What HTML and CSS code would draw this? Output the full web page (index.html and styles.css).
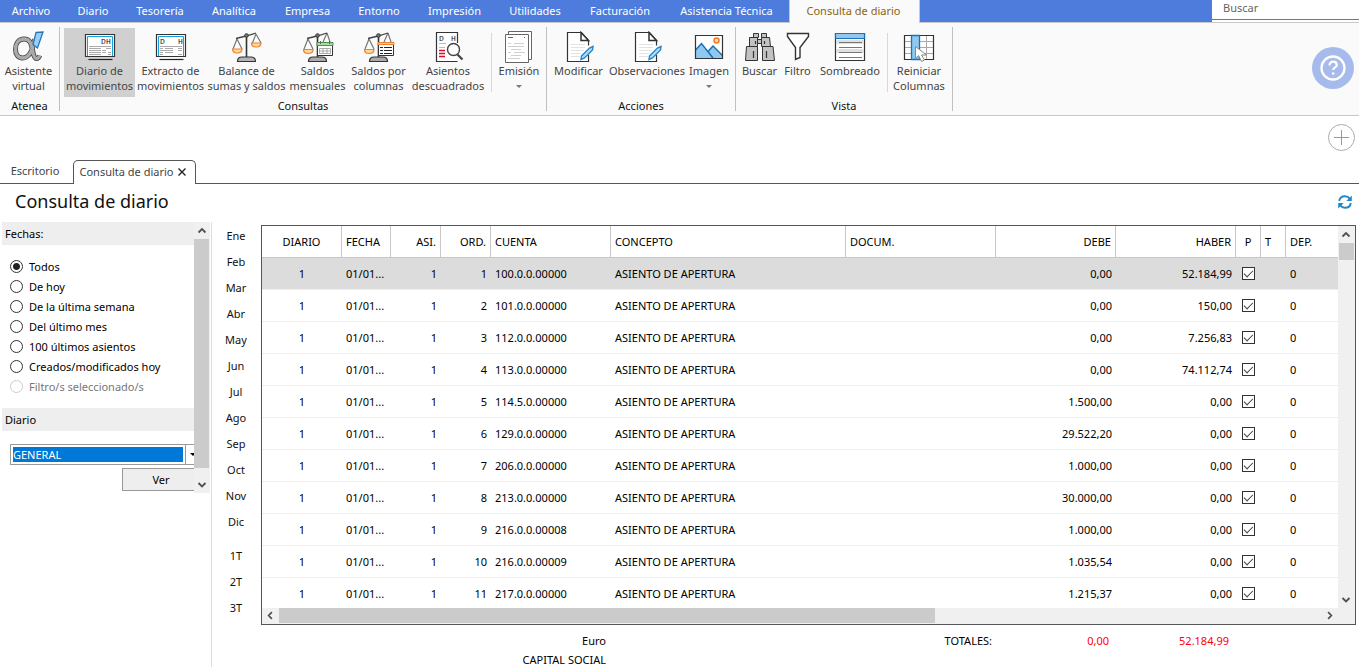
FILE: index.html
```html
<!DOCTYPE html>
<html lang="es">
<head>
<meta charset="utf-8">
<title>Consulta de diario</title>
<link rel="stylesheet" href="styles.css">
</head>
<body>
<svg class="defs" aria-hidden="true">
  <symbol id="balance" viewBox="0 0 32 32">
    <path d="M6 8 2 18M6 8l5 10M25 3l-4 10M25 3l5 9" fill="none" stroke="#777" stroke-width="1.2"/>
    <path d="M15.500 5v21" stroke="#333" stroke-width="1.600"/>
    <path d="M5 7.500l10-2.500 10-3" fill="none" stroke="#444" stroke-width="1.300"/>
    <circle cx="15.500" cy="4.500" r="1.800" fill="#777" stroke="#333"/>
    <path d="M1.500 18h9.500c0 2.500-2 4-4.700 4s-4.800-1.500-4.800-4zM20.500 12h9.500c0 2.500-2 4-4.700 4s-4.800-1.500-4.800-4z" fill="#ffd894" stroke="#e8833a" stroke-width="1.200"/>
    <path d="M6.500 30.500c0-3 1.500-4.500 4.500-4.500h9c3 0 4.500 1.500 4.500 4.500z" fill="#b5b5b5" stroke="#333" stroke-width="1.200"/>
  </symbol>
  <symbol id="halfbalance" viewBox="0 0 32 32">
    <path d="M6 8 2 18M6 8l5 10M25 2l-4 9M25 2l3 9" fill="none" stroke="#777" stroke-width="1.200"/>
    <path d="M15.500 5v21" stroke="#333" stroke-width="1.600"/>
    <path d="M5 7.500l10-2.500 10-3" fill="none" stroke="#444" stroke-width="1.300"/>
    <circle cx="15.500" cy="4.500" r="1.800" fill="#777" stroke="#333"/>
    <path d="M1.500 18.500h9.500c0 2.500-2 4-4.700 4s-4.800-1.500-4.800-4z" fill="#ffd894" stroke="#e8833a" stroke-width="1.200"/>
    <path d="M6.500 30.500c0-3 1.500-4.500 4.500-4.500h9c3 0 4.500 1.500 4.500 4.500z" fill="#aaa" stroke="#333" stroke-width="1.200"/>
  </symbol>
  <symbol id="editdoc" viewBox="0 0 32 32">
    <path d="M25.500 24v6.500h-21v-29h14l7 8v5" fill="#fff" stroke="#333" stroke-width="1.200"/>
    <path d="M18 1.500v8h7.500z" fill="#fff" stroke="#333" stroke-width="1.500"/>
    <path d="M8 13.500h14M8 16.500h14M8 19.500h13M8 22.500h10M8 25.500h9" stroke="#e2e2e2"/>
    <path d="m18.500 25 8-8 3.500-1.500-.5 3.500-8 8-3.500 1.500z" fill="#b5dcf5" stroke="#2385cc" stroke-width="1.400"/>
  </symbol>
  <symbol id="up" viewBox="0 0 16 16"><path d="M4.500 10 8 6.500l3.500 3.500" fill="none" stroke="#505050" stroke-width="1.800"/></symbol>
  <symbol id="down" viewBox="0 0 16 16"><path d="M4.500 6.500 8 10l3.500-3.500" fill="none" stroke="#505050" stroke-width="1.800"/></symbol>
  <symbol id="left" viewBox="0 0 16 16"><path d="M9.500 4.500 6 8l3.500 3.500" fill="none" stroke="#505050" stroke-width="1.800"/></symbol>
  <symbol id="right" viewBox="0 0 16 16"><path d="M6.500 4.500 10 8l-3.500 3.500" fill="none" stroke="#505050" stroke-width="1.800"/></symbol>
</svg>

<header class="topbar">
  <nav class="menu">
    <button>Archivo</button><button>Diario</button><button>Tesorería</button><button>Analítica</button><button>Empresa</button><button>Entorno</button><button>Impresión</button><button>Utilidades</button><button>Facturación</button><button>Asistencia Técnica</button><button class="current">Consulta de diario</button>
  </nav>
  <div class="search"><input type="text" placeholder="Buscar" aria-label="Buscar"></div>
</header>

<section class="ribbon">
  <div class="group atenea">
    <div class="tools">
      <button class="tool"><svg viewBox="0 0 32 32"><path d="M21.500 8c-1.500 10-5 19-12 19C5 27 2.500 23.500 2.500 18S5.500 8 11 8c6 0 7.500 5 8.500 11 1 6 2 8.500 4 8.500 1.700 0 2.500-1 3.200-3" fill="none" stroke="#444" stroke-width="5"/><path d="M21.500 8c-1.500 10-5 19-12 19C5 27 2.500 23.500 2.500 18S5.500 8 11 8c6 0 7.500 5 8.500 11 1 6 2 8.500 4 8.500 1.700 0 2.500-1 3.200-3" fill="none" stroke="#aaa" stroke-width="3.400"/><path d="m23 1.500 7-.5-5.500 16-4.500-3.500z" fill="#9bcff5" stroke="#2378bd" stroke-width="1.300"/></svg><span>Asistente<br>virtual</span></button>
    </div>
    <h2>Atenea</h2>
  </div>
  <div class="group consultas">
    <div class="tools">
      <button class="tool active"><svg viewBox="0 0 32 32"><path d="M1.500 3.500h29v22h-29z" fill="#fff" stroke="#333" stroke-width="1.200"/><path d="M3.500 25V5.500h25V25" fill="none" stroke="#1aa0dc"/><path d="M4.500 28.500h24" stroke="#222" stroke-width="1.200"/><path d="M5 15.500h22M5 17.500h12M5 19.500h12M5 21.500h12M5 23.500h12M22 17.500h5M18 19.500h4M18 21.500h4M24 21.500h3M24 23.500h3" stroke="#aaa"/><text x="17" y="13">D</text><text x="22" y="13">H</text></svg><span>Diario de<br>movimientos</span></button>
      <button class="tool"><svg viewBox="0 0 32 32"><path d="M1.500 3.500h29v22h-29z" fill="#fff" stroke="#333" stroke-width="1.200"/><path d="M3.500 25V5.500h25V25" fill="none" stroke="#1aa0dc"/><path d="M4.500 28.500h24" stroke="#222" stroke-width="1.200"/><path d="M5 15.500h22M5 17.500h3M10 17.500h8M5 19.500h13M5 21.500h3M10 21.500h8M5 23.500h3M23 17.500h4M23 19.500h4M23 23.500h4" stroke="#aaa"/><text x="5" y="13">D</text><text x="23" y="13">H</text></svg><span>Extracto de<br>movimientos</span></button>
      <button class="tool"><svg><use href="#balance"/></svg><span>Balance de<br>sumas y saldos</span></button>
      <button class="tool"><svg viewBox="0 0 32 32"><use href="#halfbalance"/><path d="M15.500 12.500h15v12h-15z" fill="#fff" stroke="#333"/><path d="M15 11.500h16v3H15z" fill="#a8dba0" stroke="#4e8f55"/><path d="M18.500 10v3M27.500 10v3" stroke="#3e7d4a"/><path d="M17.500 17.500h11v5h-11zM17.500 20h11M21 17.500v5M25 17.500v5" fill="none" stroke="#aaa"/></svg><span>Saldos<br>mensuales</span></button>
      <button class="tool"><svg viewBox="0 0 32 32"><use href="#halfbalance"/><path d="M15.500 12.500h15v12h-15z" fill="#fff" stroke="#333"/><path d="M15 11.500h16v2H15z" fill="#ffc982" stroke="#e8833a"/><path d="M17 16.500h3M21 16.500h8M17 19.500h3M21 19.500h8M17 22.500h3M21 22.500h8" stroke="#222"/></svg><span>Saldos por<br>columnas</span></button>
      <button class="tool"><svg viewBox="0 0 32 32"><path d="M25.500 12V1.500h-21v29h21" fill="#fff" stroke="#333" stroke-width="1.200"/><text x="7" y="10">D</text><text x="19" y="10">H</text><path d="M7 12.500h7M7 16.500h6" stroke="#bbb"/><path d="M7 19.500h6M7 22.500h6M7 25.500h6" stroke="#d90d2c" stroke-width="1.300"/><circle cx="21.500" cy="18.500" r="6" fill="#fff" stroke="#444" stroke-width="1.400"/><path d="m25.500 23.500 5 5" stroke="#444" stroke-width="2.200"/></svg><span>Asientos<br>descuadrados</span></button>
      <i class="divider"></i>
      <button class="tool"><svg viewBox="0 0 32 32"><path d="M5.500 3.500v-3h23v28h-3" fill="#fff" stroke="#666"/><path d="M2.500 3.500h23v28h-23z" fill="#fff" stroke="#666"/><path d="M5 12.500h3M11 12.500h10M5 15.500h16M8 18.500h10M5 21.500h3M11 21.500h11M8 24.500h10M5 27.500h12" stroke="#d0d0d0"/><path d="M5 6.500h5M21 6.500h1" stroke="#666"/></svg><span>Emisión</span><i class="caret"></i></button>
    </div>
    <h2>Consultas</h2>
  </div>
  <div class="group acciones">
    <div class="tools">
      <button class="tool"><svg><use href="#editdoc"/></svg><span>Modificar</span></button>
      <button class="tool"><svg><use href="#editdoc"/></svg><span>Observaciones</span></button>
      <button class="tool"><svg viewBox="0 0 32 32"><path d="M2.500 4.500h27v23h-27z" fill="#fff"/><path d="m2.500 19 6-6.500 6.500 8 5-5.500 9.500 9.500v3h-27z" fill="#8fc8f0"/><path d="m2.500 19 6-6.500L20 27M15 20.500l5-5.500 9.500 9.500" fill="none" stroke="#176dae" stroke-width="1.400"/><path d="M2.500 4.500h27v23h-27z" fill="none" stroke="#333" stroke-width="1.200"/><circle cx="23.500" cy="9.500" r="2.500" fill="#ffdda0" stroke="#f07b32" stroke-width="1.500"/></svg><span>Imagen</span><i class="caret"></i></button>
    </div>
    <h2>Acciones</h2>
  </div>
  <div class="group vista">
    <div class="tools">
      <button class="tool"><svg viewBox="0 0 32 32"><g fill="#c2c2c2" stroke="#333"><path d="M9.500 2.500h5v4h-5zM17.500 2.500h5v4h-5zM13 8.500h6v4h-6z"/><path d="M5.500 6.500h8v9h-8zM17.500 6.500h8l1 9h-9z"/><path d="M2.500 15.500h11v14h-12zM18.500 15.500H29l1.500 14h-12z"/></g><path d="M11.500 10v3M20.500 10v3M9.500 20v7M22.500 20v7" stroke="#333" stroke-width="1.200"/></svg><span>Buscar</span></button>
      <button class="tool"><svg viewBox="0 0 32 32"><path d="M5.500 2.500h21v3l-8.500 11v10l-4.500 2v-12l-8-11z" fill="#fff" stroke="#333" stroke-width="1.400"/></svg><span>Filtro</span></button>
      <button class="tool"><svg viewBox="0 0 32 32"><path d="M1.500 2.500h29v27h-29z" fill="#fff" stroke="#333" stroke-width="1.200"/><path d="M2 9h28v4H2zM2 18h28v4H2z" fill="#e0e0e0"/><path d="M1.500 2.500h29v5h-29z" fill="#90c8f0" stroke="#1874b8" stroke-width="1.200"/><path d="M5 11.500h23M5 16.500h23M5 21.500h23M5 26.500h23" stroke="#777"/></svg><span>Sombreado</span></button>
      <i class="divider"></i>
      <button class="tool"><svg viewBox="0 0 32 32"><path d="M1.500 4.500h29v24h-29z" fill="#fff"/><path d="M2 10.500h28M2 16.500h28M2 22.500h28M23.500 4v24" stroke="#aaa"/><path d="M1.500 4.500h29v24h-29z" fill="none" stroke="#333" stroke-width="1.200"/><path d="M8.500 4.500h8v24h-8z" fill="#90c8f0" stroke="#1874b8" stroke-width="1.300"/><path d="M12.500 15.500v12l3-3 3 6 3-1.500-3-5h5z" fill="#fff" stroke="#888"/></svg><span>Reiniciar<br>Columnas</span></button>
    </div>
    <h2>Vista</h2>
  </div>
  <button class="help" aria-label="Ayuda"><svg viewBox="0 0 42 42"><circle cx="21" cy="21" r="21" fill="#a6bbec"/><circle cx="21" cy="21" r="11.500" fill="none" stroke="#fff" stroke-width="2.300"/><path d="M17.500 18.500c0-2.500 1.500-3.800 3.600-3.800 2.200 0 3.700 1.300 3.700 3.200 0 2.600-3.600 2.500-3.600 5.100" fill="none" stroke="#fff" stroke-width="2.200"/><circle cx="21.200" cy="26.500" r="1.300" fill="#fff"/></svg></button>
</section>

<div class="addrow"><button aria-label="Añadir"><svg viewBox="0 0 28 28"><circle cx="14.500" cy="14.500" r="13" fill="none" stroke="#aaa"/><path d="M7 14.500h15M14.500 7v15" stroke="#999"/></svg></button></div>

<nav class="tabs">
  <button class="tab">Escritorio</button>
  <button class="tab open">Consulta de diario <svg viewBox="0 0 8 8"><path d="m.5.5 7 7m0-7-7 7" stroke="#222" stroke-width="1.400"/></svg></button>
</nav>

<div class="title">
  <h1>Consulta de diario</h1>
  <button aria-label="Actualizar"><svg viewBox="0 0 16 16"><path d="M2.200 7C2.600 4 5 2.200 8 2.200c2 0 3.600.9 4.700 2.400M13.800 9c-.4 3-2.800 4.800-5.800 4.800-2 0-3.600-.9-4.700-2.400" fill="none" stroke="#2388cc" stroke-width="1.900"/><path d="M14.800 1.500V7H9.300zM1.200 14.500V9h5.500z" fill="#2388cc"/></svg></button>
</div>

<main class="content">
  <aside class="filters">
    <form class="pane">
      <h3>Fechas:</h3>
      <div class="radios">
        <label><input type="radio" name="fecha" checked>Todos</label>
        <label><input type="radio" name="fecha">De hoy</label>
        <label><input type="radio" name="fecha">De la última semana</label>
        <label><input type="radio" name="fecha">Del último mes</label>
        <label><input type="radio" name="fecha">100 últimos asientos</label>
        <label><input type="radio" name="fecha">Creados/modificados hoy</label>
        <label class="off"><input type="radio" name="fecha" disabled>Filtro/s seleccionado/s</label>
      </div>
      <h3>Diario</h3>
      <div class="combo"><select aria-label="Diario"><option>GENERAL</option></select><i><b class="caret"></b></i></div>
      <button type="button" class="ver">Ver</button>
    </form>
    <div class="vscroll"><svg><use href="#up"/></svg><div class="thumb"></div><svg><use href="#down"/></svg></div>
  </aside>

  <nav class="months">
    <button>Ene</button><button>Feb</button><button>Mar</button><button>Abr</button><button>May</button><button>Jun</button><button>Jul</button><button>Ago</button><button>Sep</button><button>Oct</button><button>Nov</button><button>Dic</button>
    <button class="quarter">1T</button><button>2T</button><button>3T</button>
  </nav>

  <section class="ledger">
    <div class="grid">
      <div class="rows">
        <table>
          <colgroup><col class="c80"><col class="c49"><col class="c50"><col class="c50"><col class="c120"><col><col class="c150"><col class="c120"><col class="c120"><col class="c25"><col class="c25"><col class="c52"></colgroup>
          <thead><tr><th class="mid">DIARIO</th><th>FECHA</th><th class="num">ASI.</th><th class="num">ORD.</th><th>CUENTA</th><th>CONCEPTO</th><th>DOCUM.</th><th class="num">DEBE</th><th class="num">HABER</th><th class="mid">P</th><th>T</th><th>DEP.</th></tr></thead>
          <tbody>
            <tr class="selected"><td class="mid">1</td><td>01/01...</td><td class="num">1</td><td class="num">1</td><td>100.0.0.00000</td><td>ASIENTO DE APERTURA</td><td></td><td class="num">0,00</td><td class="num">52.184,99</td><td class="mid"><input type="checkbox" aria-label="P 1" checked></td><td></td><td>0</td></tr>
            <tr><td class="mid">1</td><td>01/01...</td><td class="num">1</td><td class="num">2</td><td>101.0.0.00000</td><td>ASIENTO DE APERTURA</td><td></td><td class="num">0,00</td><td class="num">150,00</td><td class="mid"><input type="checkbox" aria-label="P 2" checked></td><td></td><td>0</td></tr>
            <tr><td class="mid">1</td><td>01/01...</td><td class="num">1</td><td class="num">3</td><td>112.0.0.00000</td><td>ASIENTO DE APERTURA</td><td></td><td class="num">0,00</td><td class="num">7.256,83</td><td class="mid"><input type="checkbox" aria-label="P 3" checked></td><td></td><td>0</td></tr>
            <tr><td class="mid">1</td><td>01/01...</td><td class="num">1</td><td class="num">4</td><td>113.0.0.00000</td><td>ASIENTO DE APERTURA</td><td></td><td class="num">0,00</td><td class="num">74.112,74</td><td class="mid"><input type="checkbox" aria-label="P 4" checked></td><td></td><td>0</td></tr>
            <tr><td class="mid">1</td><td>01/01...</td><td class="num">1</td><td class="num">5</td><td>114.5.0.00000</td><td>ASIENTO DE APERTURA</td><td></td><td class="num">1.500,00</td><td class="num">0,00</td><td class="mid"><input type="checkbox" aria-label="P 5" checked></td><td></td><td>0</td></tr>
            <tr><td class="mid">1</td><td>01/01...</td><td class="num">1</td><td class="num">6</td><td>129.0.0.00000</td><td>ASIENTO DE APERTURA</td><td></td><td class="num">29.522,20</td><td class="num">0,00</td><td class="mid"><input type="checkbox" aria-label="P 6" checked></td><td></td><td>0</td></tr>
            <tr><td class="mid">1</td><td>01/01...</td><td class="num">1</td><td class="num">7</td><td>206.0.0.00000</td><td>ASIENTO DE APERTURA</td><td></td><td class="num">1.000,00</td><td class="num">0,00</td><td class="mid"><input type="checkbox" aria-label="P 7" checked></td><td></td><td>0</td></tr>
            <tr><td class="mid">1</td><td>01/01...</td><td class="num">1</td><td class="num">8</td><td>213.0.0.00000</td><td>ASIENTO DE APERTURA</td><td></td><td class="num">30.000,00</td><td class="num">0,00</td><td class="mid"><input type="checkbox" aria-label="P 8" checked></td><td></td><td>0</td></tr>
            <tr><td class="mid">1</td><td>01/01...</td><td class="num">1</td><td class="num">9</td><td>216.0.0.00008</td><td>ASIENTO DE APERTURA</td><td></td><td class="num">1.000,00</td><td class="num">0,00</td><td class="mid"><input type="checkbox" aria-label="P 9" checked></td><td></td><td>0</td></tr>
            <tr><td class="mid">1</td><td>01/01...</td><td class="num">1</td><td class="num">10</td><td>216.0.0.00009</td><td>ASIENTO DE APERTURA</td><td></td><td class="num">1.035,54</td><td class="num">0,00</td><td class="mid"><input type="checkbox" aria-label="P 10" checked></td><td></td><td>0</td></tr>
            <tr><td class="mid">1</td><td>01/01...</td><td class="num">1</td><td class="num">11</td><td>217.0.0.00000</td><td>ASIENTO DE APERTURA</td><td></td><td class="num">1.215,37</td><td class="num">0,00</td><td class="mid"><input type="checkbox" aria-label="P 11" checked></td><td></td><td>0</td></tr>
          </tbody>
        </table>
      </div>
      <div class="vscroll short"><svg><use href="#up"/></svg><div class="thumb"></div><svg><use href="#down"/></svg></div>
      <div class="hscroll"><svg><use href="#left"/></svg><div class="track"><div class="thumb"></div></div><svg><use href="#right"/></svg></div>
    </div>
    <div class="totals">
      <span>Euro</span><span>TOTALES:</span><span class="red">0,00</span><span class="red">52.184,99</span>
      <span>CAPITAL SOCIAL</span>
    </div>
  </section>
</main>
</body>
</html>
```
FILE: styles.css
```css
* { box-sizing: border-box; }
body { margin: 0; height: 100vh; overflow: hidden; display: flex; flex-direction: column; background: #fff; color: #111; font: 11px/15px "Noto Sans", "Open Sans", sans-serif; }
button, input, select { font: inherit; color: inherit; }
button { border: 0; padding: 0; background: none; white-space: nowrap; }
h1, h2, h3 { margin: 0; font-weight: 400; }
svg { display: block; flex: none; }
.defs { position: absolute; width: 0; height: 0; }

.topbar { display: flex; height: 23px; background: #4d7cdc; border-bottom: 1px solid #c8c8c8; }
.menu { flex: 1; display: grid; grid-template-columns: 64px 60px 74px 74px 73px 70px 81px 80px 90px 123px 131px; color: #fff; }
.menu button { padding: 0 2px 2px 0; }
.menu .current { height: 23px; background: #fafafa; color: #8a6410; border: 1px solid #c8c8c8; border-width: 0 1px; }
.search { width: 147px; background: #fff; }
.search input { display: block; width: 100%; height: 20px; padding: 0 11px 4px; border: 0; border-bottom: 1px solid #777; outline: 0; background: #fff; }
.search input::placeholder { color: #666; opacity: 1; }

.ribbon { display: flex; height: 93px; padding: 4px 0; background: #fafafa; border-bottom: 1px solid #c8c8c8; }
.group { display: flex; flex-direction: column; border-right: 1px solid #c0c0c0; }
.group h2 { font-size: 11px; text-align: center; line-height: 18px; }
.tools { display: grid; height: 71px; padding-top: 1px; }
.atenea .tools { grid-template-columns: 57px; padding-right: 2px; }
.consultas .tools { grid-template-columns: 71px 71px 81px 61px 61px 78px 9px 46px; padding-left: 4px; padding-right: 4px; }
.acciones .tools { grid-template-columns: 55px 82px 42px; padding-left: 4px; padding-right: 5px; }
.vista .tools { grid-template-columns: 37px 39px 66px 9px 54px; padding-left: 5px; padding-right: 6px; }
.tool { display: flex; flex-direction: column; align-items: center; justify-content: flex-start; height: 69px; padding-top: 3px; color: #444; }
.tool svg { width: 32px; height: 32px; }
.tool span { display: block; }
.tool text { font: 8px "Liberation Mono", monospace; fill: #111; }
.active { background: #d0d0d0; }
.divider { width: 1px; margin: 5px auto; background: #d8d8d8; }
.caret { width: 0; height: 0; border: 3px solid transparent; border-top-color: #777; border-bottom: 0; }
.tool .caret { margin-top: 7px; }
.help { align-self: flex-start; margin-left: auto; margin-right: 5px; padding-top: 20px; }
.help svg { width: 42px; height: 42px; }

.addrow { display: flex; justify-content: flex-end; height: 44px; padding: 7px 4px 0; }
.addrow button { height: 28px; }
.addrow svg { width: 28px; height: 28px; }
.tabs { display: flex; height: 24px; border-bottom: 1px solid #555; }
.tab { width: 73px; padding: 0 3px 2px 0; color: #444; }
.open { display: flex; align-items: center; justify-content: center; gap: 5px; width: 123px; height: 24px; border: 1px solid #555; border-bottom: 0; border-radius: 5px 5px 0 0; background: #fff; }
.open svg { width: 8px; height: 8px; }
.title { display: flex; align-items: center; justify-content: space-between; height: 38px; padding: 0 6px 2px 15px; }
.title h1 { padding-bottom: 2px; font-size: 18px; line-height: 24px; color: #111; }
.title svg { width: 16px; height: 16px; }

.content { flex: 1; min-height: 0; display: flex; }
.filters { flex: none; display: flex; align-items: flex-start; width: 212px; padding-left: 2px; border-right: 1px solid #ddd; }
.pane { width: 192px; overflow: hidden; color: #000; }
.pane h3 { height: 23px; padding-left: 3px; background: #eee; font-size: 11px; line-height: 23px; }
.radios { display: grid; grid-auto-rows: 20px; padding: 11px 0 12px 8px; }
.radios label { display: flex; align-items: center; gap: 6px; white-space: nowrap; }
.radios input { appearance: none; width: 13px; height: 13px; margin: 0; border: 1px solid #333; border-radius: 50%; background: #fff; }
.radios input:checked { background: radial-gradient(circle, #222 3px, #fff 4px); }
.off { color: #777; }
.radios .off input { border-color: #ccc; }
.combo { display: flex; width: 191px; height: 21px; margin: 13px 0 3px 8px; border: 1px solid #999; }
.combo select { appearance: none; width: 175px; padding: 2px; border: 0; border-right: 1px solid #999; border-radius: 0; outline: 0; color: #fff; background: linear-gradient(#0078d7, #0078d7) content-box; }
.combo i { display: flex; align-items: center; padding-left: 4px; }
.combo .caret { border-top-color: #000; }
.ver { display: block; width: 78px; height: 23px; margin-left: 120px; border: 1px solid #999; background: #eee; }
.vscroll { display: flex; flex-direction: column; width: 16px; height: 271px; background: #f0f0f0; }
.vscroll svg { width: 16px; height: 17px; }
.thumb { background: #cbcbcb; }
.vscroll .thumb { flex: 1; width: 15px; margin-bottom: 8px; }
.months { flex: none; display: flex; flex-direction: column; width: 49px; }
.months button { flex: none; height: 26px; padding-right: 1px; }
.months .quarter { margin-top: 8px; }

.ledger { flex: 1; min-width: 0; padding: 3px 3px 0 0; color: #000; }
.grid { display: grid; grid-template-columns: 1fr 17px; grid-template-rows: 382px 16px; border: 1px solid #555; background: #f0f0f0; }
.rows { overflow: hidden; background: #fff; }
table { width: 100%; table-layout: fixed; border-collapse: separate; border-spacing: 0; }
.c80 { width: 80px; } .c49 { width: 49px; } .c50 { width: 50px; } .c120 { width: 120px; } .c150 { width: 150px; } .c25 { width: 25px; } .c52 { width: 52px; }
th, td { height: 32px; padding: 0 4px; border-bottom: 1px solid #eee; font-weight: 400; text-align: left; white-space: nowrap; }
th { border-right: 1px solid #c8c8c8; border-bottom-color: #c8c8c8; }
th:last-child { border-right: 0; }
.num { text-align: right; }
.mid { padding: 0; text-align: center; }
.selected td { background: #dcdcdc; }
td input { appearance: none; display: block; width: 13px; height: 13px; margin: 0 auto; border: 1px solid #333; background: #fff; overflow: hidden; }
td input::before { content: ""; display: block; width: 8px; height: 4px; margin: 2px 1px; border: solid #444; border-width: 0 0 1px 1px; transform: rotate(-45deg); }
.short { width: 17px; height: 382px; }
.short .thumb { flex: none; width: 15px; height: 17px; margin: 0 0 auto 1px; }
.hscroll { display: flex; height: 16px; }
.hscroll svg { width: 17px; height: 15px; }
.track { flex: 1; }
.hscroll .thumb { width: 63%; height: 15px; }
.totals { display: grid; grid-template-columns: 345px 1fr 117px 120px 127px; grid-auto-rows: 19px; padding-top: 6px; line-height: 19px; text-align: right; }
.red { color: #f00; }
.totals span:nth-child(5) { grid-column: 1; }
```
